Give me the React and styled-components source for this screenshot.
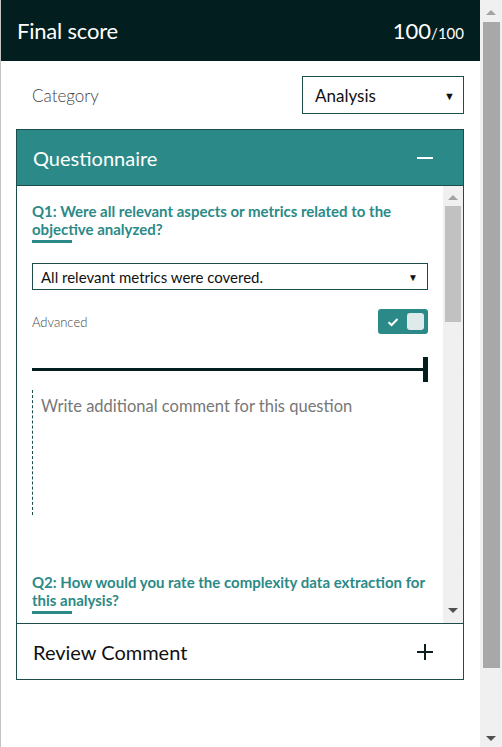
import React, { useState } from "react";
import styled, { createGlobalStyle } from "styled-components";

const GlobalStyle = createGlobalStyle`
  html, body {
    margin: 0;
    padding: 0;
    background: #fff;
    font-family: Lato, "Open Sans", sans-serif;
  }
  * { box-sizing: border-box; }
`;

const teal = "#2b8a87";
const dark = "#021e1e";
const line = "#1c4d4a";

const Page = styled.div`
  display: flex;
  height: 747px;
  border-left: 1px solid #c3c3c3;
  overflow: hidden;
`;

const Panel = styled.div`
  flex: 1;
  display: flex;
  flex-direction: column;
`;

const Header = styled.div`
  height: 61px;
  background: ${dark};
  color: #fff;
  display: flex;
  align-items: center;
  justify-content: space-between;
  padding: 0 16px 0 16px;

  h1 {
    margin: 0;
    font-size: 22px;
    font-weight: 400;
    letter-spacing: -0.2px;
  }
`;

const Score = styled.div`
  font-size: 22px;
  small { font-size: 15px; }
`;

const Content = styled.div`
  padding: 15px 16px 0 15px;
  display: flex;
  flex-direction: column;
`;

const CategoryRow = styled.div`
  display: flex;
  align-items: center;
  justify-content: space-between;
  padding-left: 16px;
  margin-bottom: 15px;

  label {
    font-size: 17px;
    font-weight: 300;
    color: #444;
  }
`;

const Select = styled.div`
  display: flex;
  align-items: center;
  justify-content: space-between;
  width: ${(p) => p.$width || "100%"};
  height: ${(p) => p.$height || 38}px;
  border: 1px solid ${line};
  padding: 0 ${(p) => (p.$small ? 9 : 8)}px 0 ${(p) => (p.$small ? 8 : 12)}px;
  font-size: ${(p) => (p.$small ? 15 : 17)}px;
  color: #111;
  background: #fff;

  span.arrow {
    font-size: ${(p) => (p.$small ? 10 : 11)}px;
  }
`;

const Card = styled.div`
  border: 1px solid ${line};
  ${(p) => p.$open && `border-bottom: none;`}
`;

const CardHead = styled.div`
  height: ${(p) => (p.$open ? 56 : 55)}px;
  display: flex;
  align-items: center;
  justify-content: space-between;
  padding: 0 30px 0 16px;
  background: ${(p) => (p.$open ? teal : "#fff")};
  color: ${(p) => (p.$open ? "#fff" : "#111")};
  border-bottom: ${(p) => (p.$open ? `1px solid ${line}` : "none")};
  font-size: 20px;
`;

const CardBody = styled.div`
  height: 437px;
  display: flex;
  border-left: 1px dashed ${line};
  border-right: 1px dashed ${line};
  margin: 0 -1px;
`;

const Scroller = styled.div`
  flex: 1;
  overflow: hidden;
  padding: 16px 15px 0 15px;
`;

const Question = styled.div`
  margin-bottom: 58px;
`;

const QTitle = styled.h3`
  margin: 0;
  font-size: 15px;
  font-weight: 700;
  line-height: 18px;
  color: ${teal};

  &::after {
    content: "";
    display: block;
    width: 40px;
    height: 3px;
    margin-top: 2px;
    background: ${teal};
  }
`;

const Answer = styled.div`
  margin-top: 20px;
`;

const AdvancedRow = styled.div`
  display: flex;
  align-items: center;
  justify-content: space-between;
  margin-top: 19px;

  span {
    font-size: 13px;
    font-weight: 300;
    color: #444;
    padding-top: 1px;
  }
`;

const Toggle = styled.div`
  width: 50px;
  height: 25px;
  border-radius: 3px;
  background: ${teal};
  display: flex;
  align-items: center;
  justify-content: space-between;
  padding: 0 4px 0 9px;

  i {
    width: 17px;
    height: 17px;
    border-radius: 3px;
    background: #dfeaeb;
  }
`;

const Slider = styled.div`
  margin-top: 23px;
  height: 25px;
  display: flex;
  align-items: center;

  b {
    flex: 1;
    height: 3px;
    background: ${dark};
  }
  i {
    width: 5px;
    height: 25px;
    background: ${dark};
  }
`;

const Comment = styled.div`
  margin-top: 8px;
  height: 125px;
  border-left: 1px dashed ${line};
  padding: 6px 8px;
  font-size: 16.5px;
  color: #777;
`;

const Bar = styled.div`
  width: ${(p) => p.$w}px;
  flex: none;
  background: #f0f0f0;
  display: flex;
  flex-direction: column;
  align-items: center;
  padding: ${(p) => p.$pad};
`;

const Arrow = styled.div`
  width: 0;
  height: 0;
  border-left: 5px solid transparent;
  border-right: 5px solid transparent;
  ${(p) =>
    p.$down
      ? `border-top: 5px solid #505050; margin-top: auto;`
      : `border-bottom: 5px solid #a3a3a3;`}
`;

const Thumb = styled.div`
  width: ${(p) => p.$w}px;
  height: ${(p) => p.$h}px;
  margin-top: ${(p) => p.$top}px;
  background: ${(p) => p.$color};
`;

const Check = () => (
  <svg width="12" height="10" viewBox="0 0 12 10">
    <path d="M1.5 5.2 L4.6 8 L10.5 2" fill="none" stroke="#fff" strokeWidth="2" />
  </svg>
);

const Sign = ({ plus, color }) => (
  <svg width="16" height="16" viewBox="0 0 16 16">
    <rect x="0" y="7" width="16" height="2" fill={color} />
    {plus && <rect x="7" y="0" width="2" height="16" fill={color} />}
  </svg>
);

const questions = [
  "Q1: Were all relevant aspects or metrics related to the objective analyzed?",
  "Q2: How would you rate the complexity data extraction for this analysis?",
];

export default function App() {
  const [advanced] = useState(true);

  return (
    <Page>
      <GlobalStyle />
      <Panel>
        <Header>
          <h1>Final score</h1>
          <Score>
            100<small>/100</small>
          </Score>
        </Header>
        <Content>
          <CategoryRow>
            <label>Category</label>
            <Select $width="162px">
              Analysis <span className="arrow">▼</span>
            </Select>
          </CategoryRow>

          <Card $open>
            <CardHead $open>
              Questionnaire
              <Sign color="#fff" />
            </CardHead>
            <CardBody>
              <Scroller>
                <Question>
                  <QTitle>{questions[0]}</QTitle>
                  <Answer>
                    <Select $small $height={27}>
                      All relevant metrics were covered.
                      <span className="arrow">▼</span>
                    </Select>
                  </Answer>
                  <AdvancedRow>
                    <span>Advanced</span>
                    <Toggle>
                      {advanced && <Check />}
                      <i />
                    </Toggle>
                  </AdvancedRow>
                  <Slider>
                    <b />
                    <i />
                  </Slider>
                  <Comment>Write additional comment for this question</Comment>
                </Question>
                <Question>
                  <QTitle>{questions[1]}</QTitle>
                </Question>
              </Scroller>
              <Bar $w={20} $pad="9px 0 10px">
                <Arrow />
                <Thumb $w={16} $h={116} $top={6} $color="#c1c1c1" />
                <Arrow $down />
              </Bar>
            </CardBody>
          </Card>

          <Card>
            <CardHead>
              Review Comment
              <Sign plus color="#0b1f1f" />
            </CardHead>
          </Card>
        </Content>
      </Panel>
      <Bar $w={22} $pad="10px 0 6px">
        <Arrow />
        <Thumb $w={17} $h={646} $top={7} $color="#a8a8a8" />
        <Arrow $down />
      </Bar>
    </Page>
  );
}
